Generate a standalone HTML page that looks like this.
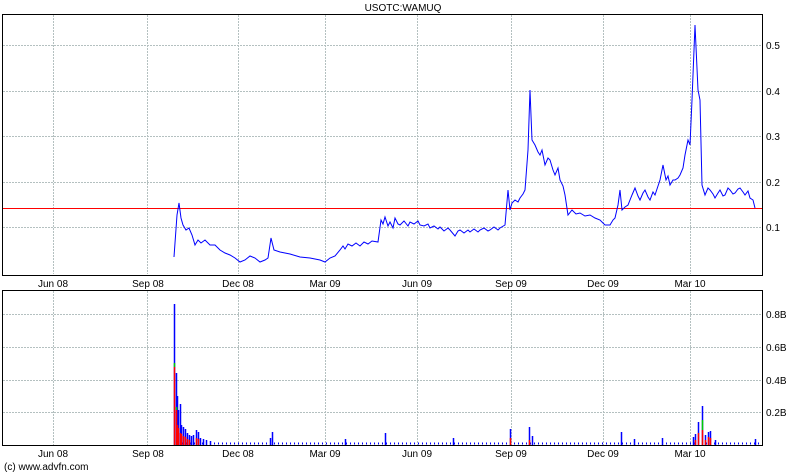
<!DOCTYPE html>
<html><head><style>
html,body{margin:0;padding:0;background:#fff;width:800px;height:475px;overflow:hidden}
svg{display:block}
text{font-family:"Liberation Sans",sans-serif;font-size:10px;fill:#000}
</style></head><body>
<svg width="800" height="475" xmlns="http://www.w3.org/2000/svg">
<text x="403" y="11" text-anchor="middle">USOTC:WAMUQ</text>
<g stroke="#b4c0c0" stroke-width="1" stroke-dasharray="2,1">
<line x1="53.5" y1="15" x2="53.5" y2="274"/><line x1="147.5" y1="15" x2="147.5" y2="274"/>
<line x1="238.5" y1="15" x2="238.5" y2="274"/><line x1="325.5" y1="15" x2="325.5" y2="274"/>
<line x1="417.5" y1="15" x2="417.5" y2="274"/><line x1="511.5" y1="15" x2="511.5" y2="274"/>
<line x1="603.5" y1="15" x2="603.5" y2="274"/><line x1="690.5" y1="15" x2="690.5" y2="274"/>
<line x1="3" y1="45.5" x2="762" y2="45.5"/><line x1="3" y1="91.5" x2="762" y2="91.5"/>
<line x1="3" y1="136.5" x2="762" y2="136.5"/><line x1="3" y1="182.5" x2="762" y2="182.5"/>
<line x1="3" y1="227.5" x2="762" y2="227.5"/>
<line x1="53.5" y1="291" x2="53.5" y2="445"/><line x1="147.5" y1="291" x2="147.5" y2="445"/>
<line x1="238.5" y1="291" x2="238.5" y2="445"/><line x1="325.5" y1="291" x2="325.5" y2="445"/>
<line x1="417.5" y1="291" x2="417.5" y2="445"/><line x1="511.5" y1="291" x2="511.5" y2="445"/>
<line x1="603.5" y1="291" x2="603.5" y2="445"/><line x1="690.5" y1="291" x2="690.5" y2="445"/>
<line x1="3" y1="314.5" x2="762" y2="314.5"/><line x1="3" y1="347.5" x2="762" y2="347.5"/>
<line x1="3" y1="380.5" x2="762" y2="380.5"/><line x1="3" y1="412.5" x2="762" y2="412.5"/>
</g>
<rect x="2.5" y="14.5" width="760" height="261" fill="none" stroke="#000" stroke-width="1"/>
<rect x="2.5" y="290.5" width="760" height="155" fill="none" stroke="#000" stroke-width="1"/>
<line x1="3" y1="208.5" x2="762" y2="208.5" stroke="#f00" stroke-width="1"/>
<polyline fill="none" stroke="#0000ff" stroke-width="1" points="174,257 177,215 179,203 181,218 183,225 186,230 189,228 192,235 195,245 198,240 201,243 205,240 210,245 215,245 220,250 225,253 230,255 235,258 240,262 245,260 250,256 255,258 260,262 265,260 268,258 271,238 274,250 280,252 290,254 300,257 310,258 320,260 325,262 330,258 335,256 340,250 343,246 345,249 348,244 352,246 356,243 360,246 364,242 368,244 372,241 378,242 381,220 383,224 385,217 388,226 390,222 393,228 395,218 398,224 400,225 404,221 408,226 410,222 414,224 418,221 420,225 424,226 428,224 430,228 434,226 438,229 440,227 444,231 448,228 450,230 455,236 458,231 460,230 464,233 468,230 470,232 474,229 478,232 480,230 484,228 488,231 490,230 494,227 498,230 500,228 505,225 508,190 510,210 512,203 515,200 518,202 520,198 523,194 525,190 528,150 530,90 532,140 535,145 538,152 540,155 542,150 545,165 548,158 550,160 553,170 555,175 558,168 560,180 563,186 565,195 568,215 572,210 576,214 580,213 585,216 590,215 595,218 600,220 605,225 610,225 613,220 615,218 618,205 620,190 622,210 625,207 628,205 632,195 635,188 638,196 640,200 643,193 645,190 648,197 650,200 653,192 655,195 658,186 660,180 663,165 666,180 668,176 670,185 673,180 675,180 678,178 680,175 683,168 685,155 688,140 690,145 692,100 695,25 698,90 700,100 702,185 705,195 708,188 710,190 713,194 715,198 718,193 720,190 723,196 725,195 728,188 730,190 733,194 735,193 738,189 740,188 743,192 745,195 748,191 750,198 753,200 755,208"/>
<g>
<text x="766" y="49">0.5</text><text x="766" y="95">0.4</text><text x="766" y="140">0.3</text>
<text x="766" y="186">0.2</text><text x="766" y="231">0.1</text>
<text x="766" y="318">0.8B</text><text x="766" y="351">0.6B</text><text x="766" y="384">0.4B</text><text x="766" y="416">0.2B</text>
</g>
<g text-anchor="middle">
<text x="53" y="287">Jun 08</text><text x="148" y="287">Sep 08</text><text x="238" y="287">Dec 08</text>
<text x="325" y="287">Mar 09</text><text x="417" y="287">Jun 09</text><text x="511" y="287">Sep 09</text>
<text x="603" y="287">Dec 09</text><text x="690" y="287">Mar 10</text>
<text x="53" y="457">Jun 08</text><text x="148" y="457">Sep 08</text><text x="238" y="457">Dec 08</text>
<text x="325" y="457">Mar 09</text><text x="417" y="457">Jun 09</text><text x="511" y="457">Sep 09</text>
<text x="603" y="457">Dec 09</text><text x="690" y="457">Mar 10</text>
</g>
<text x="4" y="470">(c) www.advfn.com</text>
<line x1="174" y1="443.5" x2="760" y2="443.5" stroke="#00f" stroke-width="2" stroke-dasharray="1,3"/>
<g stroke-width="1.5">
<g stroke="#00f">
<line x1="174.5" y1="304" x2="174.5" y2="445"/><line x1="176.5" y1="373" x2="176.5" y2="445"/>
<line x1="177.5" y1="396" x2="177.5" y2="445"/><line x1="178.5" y1="410" x2="178.5" y2="445"/>
<line x1="180.5" y1="404" x2="180.5" y2="445"/><line x1="181.5" y1="425" x2="181.5" y2="445"/>
<line x1="183.5" y1="427" x2="183.5" y2="445"/><line x1="185.5" y1="429" x2="185.5" y2="445"/>
<line x1="187.5" y1="433" x2="187.5" y2="445"/><line x1="189.5" y1="435" x2="189.5" y2="445"/>
<line x1="191.5" y1="436" x2="191.5" y2="445"/><line x1="193.5" y1="435" x2="193.5" y2="445"/>
<line x1="196.5" y1="430" x2="196.5" y2="445"/><line x1="198.5" y1="432" x2="198.5" y2="445"/>
<line x1="200.5" y1="438" x2="200.5" y2="445"/><line x1="203.5" y1="439" x2="203.5" y2="445"/>
<line x1="206.5" y1="440" x2="206.5" y2="445"/><line x1="210.5" y1="441" x2="210.5" y2="445"/>
<line x1="272.5" y1="432" x2="272.5" y2="445"/><line x1="270.5" y1="438" x2="270.5" y2="445"/>
<line x1="345.5" y1="439" x2="345.5" y2="445"/><line x1="385.5" y1="433" x2="385.5" y2="445"/>
<line x1="453.5" y1="438" x2="453.5" y2="445"/><line x1="510.5" y1="429" x2="510.5" y2="445"/>
<line x1="529.5" y1="427" x2="529.5" y2="445"/><line x1="532.5" y1="436" x2="532.5" y2="445"/>
<line x1="621.5" y1="432" x2="621.5" y2="445"/><line x1="634.5" y1="439" x2="634.5" y2="445"/>
<line x1="662.5" y1="438" x2="662.5" y2="445"/><line x1="693.5" y1="437" x2="693.5" y2="445"/>
<line x1="695.5" y1="434" x2="695.5" y2="445"/><line x1="698.5" y1="422" x2="698.5" y2="445"/>
<line x1="702.5" y1="406" x2="702.5" y2="445"/><line x1="705.5" y1="435" x2="705.5" y2="445"/>
<line x1="708.5" y1="432" x2="708.5" y2="445"/><line x1="710.5" y1="431" x2="710.5" y2="445"/>
<line x1="715.5" y1="440" x2="715.5" y2="445"/><line x1="755.5" y1="439" x2="755.5" y2="445"/>
</g>
<g stroke="#f00">
<line x1="174.5" y1="367" x2="174.5" y2="445"/><line x1="176.5" y1="410" x2="176.5" y2="445"/>
<line x1="177.5" y1="425" x2="177.5" y2="445"/><line x1="178.5" y1="428" x2="178.5" y2="445"/>
<line x1="180.5" y1="433" x2="180.5" y2="445"/><line x1="181.5" y1="434" x2="181.5" y2="445"/>
<line x1="183.5" y1="436" x2="183.5" y2="445"/><line x1="185.5" y1="437" x2="185.5" y2="445"/>
<line x1="187.5" y1="439" x2="187.5" y2="445"/><line x1="189.5" y1="440" x2="189.5" y2="445"/>
<line x1="196.5" y1="438" x2="196.5" y2="445"/><line x1="198.5" y1="439" x2="198.5" y2="445"/>
<line x1="510.5" y1="438" x2="510.5" y2="445"/><line x1="529.5" y1="440" x2="529.5" y2="445"/>
<line x1="695.5" y1="440" x2="695.5" y2="445"/><line x1="698.5" y1="433" x2="698.5" y2="445"/>
<line x1="702.5" y1="430" x2="702.5" y2="445"/><line x1="705.5" y1="440" x2="705.5" y2="445"/>
<line x1="708.5" y1="437" x2="708.5" y2="445"/><line x1="710.5" y1="438" x2="710.5" y2="445"/>
</g>
<g stroke="#0c0">
<line x1="174.5" y1="363" x2="174.5" y2="367"/><line x1="176.5" y1="407" x2="176.5" y2="410"/>
<line x1="702.5" y1="420" x2="702.5" y2="430"/>
</g>
</g>
</svg>
</body></html>
